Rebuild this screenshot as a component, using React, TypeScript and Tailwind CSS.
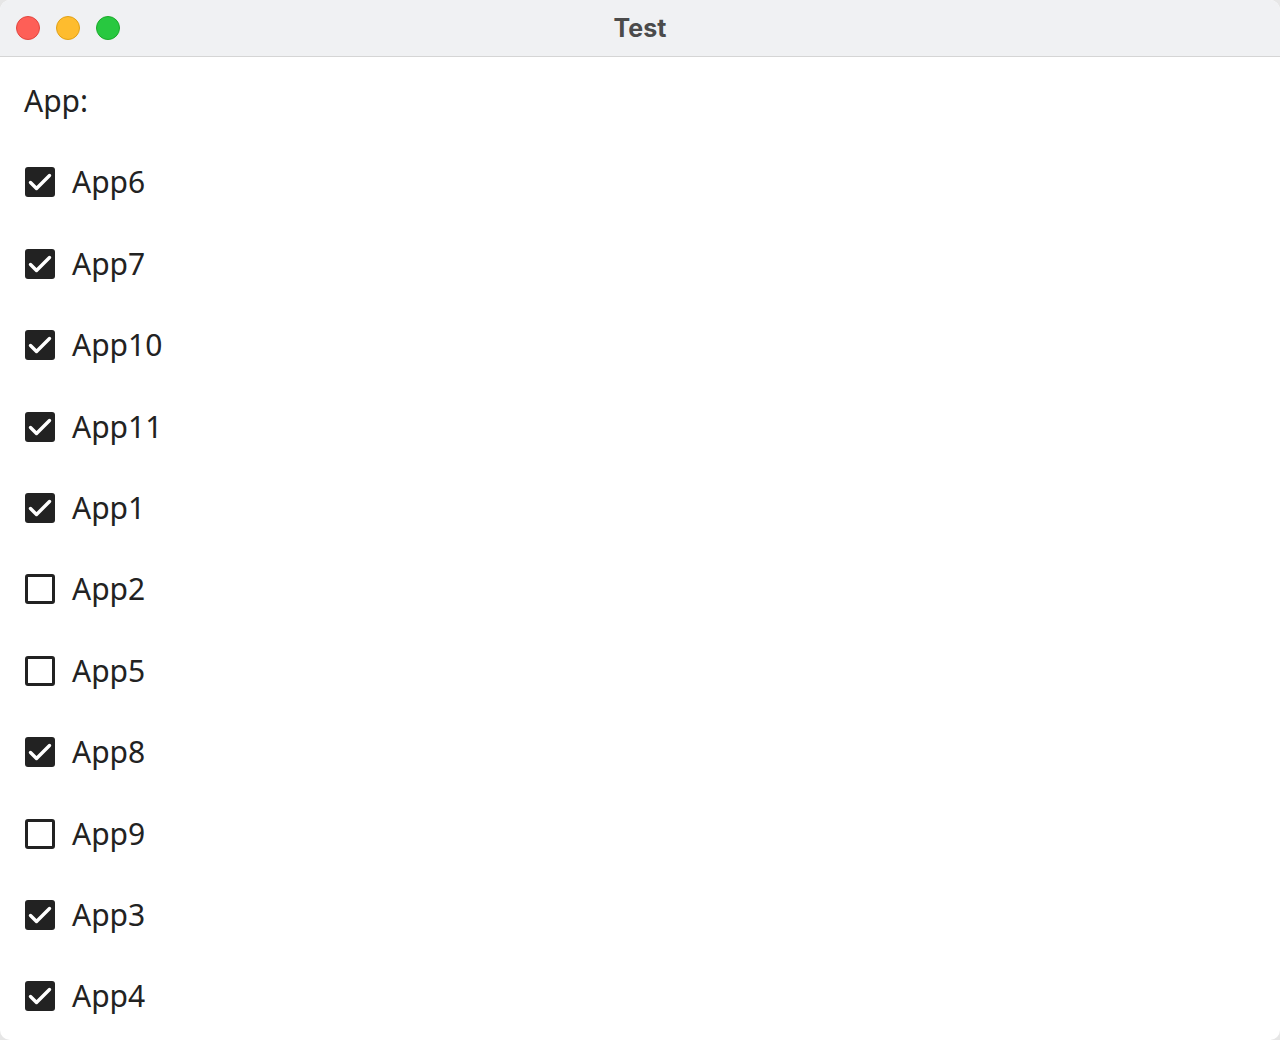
import React from "react";

const items: { label: string; checked: boolean }[] = [
  { label: "App6", checked: true },
  { label: "App7", checked: true },
  { label: "App10", checked: true },
  { label: "App11", checked: true },
  { label: "App1", checked: true },
  { label: "App2", checked: false },
  { label: "App5", checked: false },
  { label: "App8", checked: true },
  { label: "App9", checked: false },
  { label: "App3", checked: true },
  { label: "App4", checked: true },
];

function Box({ checked }: { checked: boolean }) {
  if (checked) {
    return (
      <div className="w-[30px] h-[30px] rounded-[3px] bg-[#222222] flex items-center justify-center shrink-0">
        <svg width="30" height="30" viewBox="0 0 30 30">
          <path d="M5.5 15.5 L11.5 21.5 L24.5 8.5" fill="none" stroke="#ffffff" strokeWidth="3.4" strokeLinecap="round" strokeLinejoin="round" />
        </svg>
      </div>
    );
  }
  return <div className="w-[30px] h-[30px] rounded-[3px] border-[3px] border-[#222222] bg-white shrink-0" />;
}

export default function App() {
  return (
    <div className="w-[1280px] h-[1040px] bg-[#e6e6e6] overflow-hidden" style={{ fontFamily: '"Noto Sans", sans-serif' }}>
      <div className="w-full h-full bg-white rounded-[10px] overflow-hidden flex flex-col">
        <div className="h-[57px] shrink-0 bg-[#f0f1f3] border-b border-[#d5d5d5] relative flex items-center justify-center">
          <div className="absolute left-[16px] top-[16px] flex gap-[16px]">
            <div className="w-[24px] h-[24px] rounded-full bg-[#fe5f57] border border-[#e2463f]" />
            <div className="w-[24px] h-[24px] rounded-full bg-[#febc2e] border border-[#e1a116]" />
            <div className="w-[24px] h-[24px] rounded-full bg-[#28c840] border border-[#1aab29]" />
          </div>
          <span className="text-[25px] font-bold text-[#4b4b4b] leading-none" style={{ fontFamily: "Inter, sans-serif" }}>
            Test
          </span>
        </div>
        <div className="pt-[3.3px] pl-[24px] flex flex-col text-[#222222] text-[30px]">
          <div className="h-[81.4px] flex items-center leading-none">App:</div>
          {items.map((it) => (
            <div key={it.label} className="h-[81.4px] flex items-center gap-[17px] pl-px leading-none">
              <Box checked={it.checked} />
              <span>{it.label}</span>
            </div>
          ))}
        </div>
      </div>
    </div>
  );
}
